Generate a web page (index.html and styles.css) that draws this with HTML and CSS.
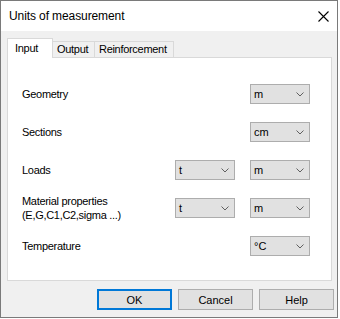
FILE: index.html
```html
<!DOCTYPE html>
<html lang="en">
<head>
  <meta charset="UTF-8" />
  <title>Units of measurement</title>
  <link rel="stylesheet" href="styles.css">
</head>
<body>

<div class="window">
  <div class="titlebar">
    <span class="title">Units of measurement</span>
    <svg class="close" width="11" height="11" viewBox="0 0 11 11">
      <path d="M0.5 0.5 L10.5 10.5 M10.5 0.5 L0.5 10.5" stroke="#000" stroke-width="1.1" fill="none"/>
    </svg>
  </div>

  <div class="content">
    <div class="tabs">
      <div class="tab active">Input</div>
      <div class="tab tab-output">Output</div>
      <div class="tab tab-reinf">Reinforcement</div>
    </div>

    <div class="panel">
      <div class="grid">
        <div class="label">Geometry</div>
        <div></div>
        <div class="combo"><span>m</span><svg width="8" height="5" viewBox="0 0 8 5"><path d="M0.5 0.5 L4 4 L7.5 0.5" stroke="#606060" fill="none"/></svg></div>

        <div class="label">Sections</div>
        <div></div>
        <div class="combo"><span>cm</span><svg width="8" height="5" viewBox="0 0 8 5"><path d="M0.5 0.5 L4 4 L7.5 0.5" stroke="#606060" fill="none"/></svg></div>

        <div class="label">Loads</div>
        <div class="combo"><span>t</span><svg width="8" height="5" viewBox="0 0 8 5"><path d="M0.5 0.5 L4 4 L7.5 0.5" stroke="#606060" fill="none"/></svg></div>
        <div class="combo"><span>m</span><svg width="8" height="5" viewBox="0 0 8 5"><path d="M0.5 0.5 L4 4 L7.5 0.5" stroke="#606060" fill="none"/></svg></div>

        <div class="label">Material properties<br>(E,G,C1,C2,sigma ...)</div>
        <div class="combo"><span>t</span><svg width="8" height="5" viewBox="0 0 8 5"><path d="M0.5 0.5 L4 4 L7.5 0.5" stroke="#606060" fill="none"/></svg></div>
        <div class="combo"><span>m</span><svg width="8" height="5" viewBox="0 0 8 5"><path d="M0.5 0.5 L4 4 L7.5 0.5" stroke="#606060" fill="none"/></svg></div>

        <div class="label">Temperature</div>
        <div></div>
        <div class="combo"><span>°C</span><svg width="8" height="5" viewBox="0 0 8 5"><path d="M0.5 0.5 L4 4 L7.5 0.5" stroke="#606060" fill="none"/></svg></div>
      </div>
    </div>

    <div class="buttons">
      <button class="btn default">OK</button>
      <button class="btn">Cancel</button>
      <button class="btn">Help</button>
    </div>
  </div>
</div>

</body>
</html>
```

FILE: styles.css
```css
body {
  margin: 0;
  background-color: #fff;
  font-family: "Liberation Sans", Arial, sans-serif;
  font-size: 11px;
  color: #000;
}
.window {
  width: 338px;
  height: 318px;
  box-sizing: border-box;
  border: 1px solid #7a7a7a;
  display: flex;
  flex-direction: column;
}
.titlebar {
  height: 30px;
  background-color: #fff;
  display: flex;
  align-items: center;
  justify-content: space-between;
  padding: 0 8px 0 8px;
}
.title {
  font-size: 12px;
  letter-spacing: -0.1px;
}
.close {
  display: block;
  margin-top: 1px;
}
.content {
  flex: 1;
  background-color: #f0f0f0;
  padding: 7px 3px 0 6px;
}
.tabs {
  display: flex;
  align-items: flex-end;
  height: 19px;
  letter-spacing: -0.3px;
}
.tab {
  box-sizing: border-box;
  height: 16px;
  line-height: 15px;
  border-top: 1px solid #d9d9d9;
  border-right: 1px solid #d9d9d9;
  background-color: #f0f0f0;
  padding-left: 4px;
  white-space: nowrap;
}
.tab.active {
  position: relative;
  width: 46px;
  height: 20px;
  line-height: 18px;
  margin-bottom: -1px;
  border-left: 1px solid #d9d9d9;
  background-color: #fff;
  padding-left: 7px;
}
.tab-output {
  width: 42px;
}
.tab-reinf {
  width: 79px;
}
.panel {
  width: 325px;
  height: 224px;
  box-sizing: border-box;
  border: 1px solid #d9d9d9;
  background-color: #fff;
  padding: 26px 0 0 14px;
}
.grid {
  display: grid;
  grid-template-columns: 138px 60px 60px;
  grid-auto-rows: 20px;
  column-gap: 15px;
  row-gap: 18px;
  align-items: center;
}
.label {
  line-height: 14px;
  letter-spacing: -0.3px;
  white-space: nowrap;
}
.combo {
  box-sizing: border-box;
  height: 20px;
  border: 1px solid #adadad;
  background-color: #e1e1e1;
  display: flex;
  align-items: center;
  justify-content: space-between;
  padding: 0 5px 0 3px;
}
.combo svg {
  display: block;
}
.buttons {
  display: flex;
  justify-content: flex-end;
  gap: 6px;
  margin-top: 8px;
}
.btn {
  box-sizing: border-box;
  width: 75px;
  height: 21px;
  border: 1px solid #adadad;
  background-color: #e1e1e1;
  font-family: "Liberation Sans", Arial, sans-serif;
  font-size: 11px;
  color: #000;
  padding: 0;
}
.btn.default {
  border: 2px solid #0078d7;
}
```
